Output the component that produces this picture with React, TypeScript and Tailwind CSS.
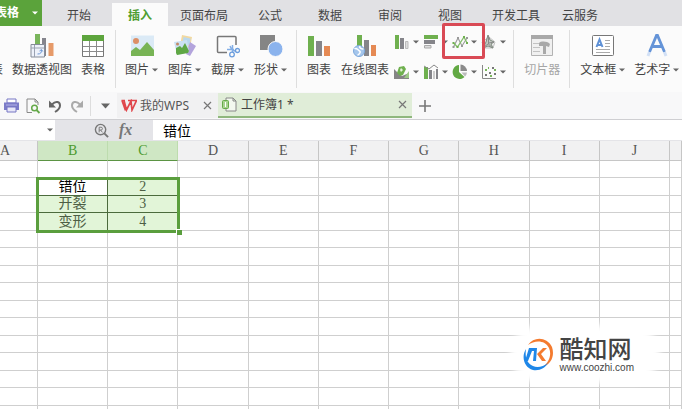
import React, { useState } from 'react';

const UI_FONT = "font-['Noto_Sans','Noto_Sans_CJK_SC',sans-serif]";
const CELL_FONT = "font-['Liberation_Serif','Noto_Sans_CJK_SC',serif]";

const TABS = [
  { name: '开始', width: 'w-[66px]' },
  { name: '插入', width: 'w-[56px]' },
  { name: '页面布局', width: 'w-[72px]' },
  { name: '公式', width: 'w-[60px]' },
  { name: '数据', width: 'w-[60px]' },
  { name: '审阅', width: 'w-[60px]' },
  { name: '视图', width: 'w-[60px]' },
  { name: '开发工具', width: 'w-[72px]' },
  { name: '云服务', width: 'w-[56px]' },
];

const COLUMNS = ['A', 'B', 'C', 'D', 'E', 'F', 'G', 'H', 'I', 'J', ''];
const DATA: Record<string, string> = {
  B2: '错位', C2: '2',
  B3: '开裂', C3: '3',
  B4: '变形', C4: '4',
};
const ROWS = Array.from({ length: 15 }, (_, i) => i + 1);

function Caret({ className = 'text-[#666]' }: { className?: string }) {
  return (
    <svg width="6" height="4" viewBox="0 0 6 4" className={`shrink-0 ${className}`} fill="currentColor">
      <path d="M0 0.500h6L3 3.500z" />
    </svg>
  );
}

interface ToolProps {
  label: string;
  menu?: boolean;
  disabled?: boolean;
  children: React.ReactNode;
}

function Tool({ label, menu, disabled, children }: ToolProps) {
  return (
    <button
      disabled={disabled}
      className={`flex shrink-0 flex-col items-center gap-[4px] pt-[4px] ${disabled ? 'text-[#a6a6a6]' : 'text-[#444]'}`}
    >
      <svg width="24" height="24" viewBox="0 0 24 24" fill="none">{children}</svg>
      <span className="flex items-center gap-[3px] text-[12px] leading-[16px] whitespace-nowrap">
        {label}
        {menu && <Caret />}
      </span>
    </button>
  );
}

function SmallTool({ title, children }: { title: string; children: React.ReactNode }) {
  return (
    <button title={title} aria-label={title} className="flex h-[30px] w-[29px] items-center gap-[3px]">
      <svg width="16" height="16" viewBox="0 0 16 16" fill="none" className="shrink-0">{children}</svg>
      <Caret />
    </button>
  );
}

function Ribbon() {
  return (
    <div className="flex h-[66px] overflow-hidden bg-[#fbfbfb] pt-[4px]">
      {/* 表格 */}
      <div className="flex h-[58px] shrink-0 items-start gap-[9px] border-r border-[#dedede] pr-[10px]">
        <div className="flex w-[3px] shrink-0 justify-end overflow-hidden pt-[32px] text-[12px] leading-[16px] whitespace-nowrap text-[#444]">
          表
        </div>
        <Tool label="数据透视图">
          <path d="M5 0h5v11H5z" fill="#7ab55c" />
          <path d="M12 4h4v18h-4z" fill="#85858d" />
          <path d="M18.500 9h5v13h-5z" fill="#e69a69" />
          <path d="M1 10.500h13.500V23H1z" fill="#eef2fa" stroke="#858c98" />
          <path d="M4.500 11v12M1 14h13" stroke="#9aa2b2" />
          <path d="M7.500 20c3 0 4-1 4-4M9.500 17l2-1.500 1.300 2" stroke="#6f99d6" />
        </Tool>
        <Tool label="表格">
          <path d="M1.500 1.500h21v21h-21z" fill="#fff" stroke="#777" />
          <path d="M1 1h22v6H1z" fill="#5da53d" />
          <path d="M2 12.500h20M2 17.500h20M8.500 7v15M15.500 7v15" stroke="#8b8b8b" />
        </Tool>
      </div>
      {/* 插图 */}
      <div className="flex h-[58px] shrink-0 items-start gap-[10px] border-r border-[#dedede] px-[9px]">
        <Tool label="图片" menu>
          <path d="M1 1.500h23V22H1z" fill="#dbeaf6" />
          <circle cx="6" cy="7" r="3" fill="#dc8f67" />
          <path d="M1 22v-5l5-4 4 3 7-8 7 8v6z" fill="#78b455" />
        </Tool>
        <Tool label="图库" menu>
          <path d="M9 1l10 2-2 11-10-2z" fill="#f2d9a0" />
          <path d="M10.500 3l7 1.500-1 7-7-1.500z" fill="#b9d8ee" />
          <path d="M17 8l6 4-6 10-4-2z" fill="#b3a4dc" />
          <path d="M1 8l13-2 2 12-12 3z" fill="#cbe1f3" />
          <path d="M3 19l0-5 4-2 2 2 3-5 4 8-1 2-11 2z" fill="#5fa745" />
          <circle cx="4.500" cy="10" r="1.500" fill="#c38a67" />
        </Tool>
        <Tool label="截屏" menu>
          <path d="M11 18.500H2.500a1 1 0 0 1-1-1v-14a1 1 0 0 1 1-1H19a1 1 0 0 1 1 1V11" stroke="#777" strokeWidth="1.500" />
          <path d="M16.500 11v7M11 15.500h7M16.500 16l5 2M14 12l2 4" stroke="#82aee6" strokeWidth="1.500" />
          <circle cx="16" cy="20.500" r="2.300" stroke="#6b9ddd" strokeWidth="1.300" fill="#fbfbfb" />
          <circle cx="21.500" cy="16.500" r="2" stroke="#6b9ddd" strokeWidth="1.300" fill="#fbfbfb" />
        </Tool>
        <Tool label="形状" menu>
          <path d="M1 1h15v15H1z" fill="#858585" />
          <circle cx="16.500" cy="15" r="7.500" fill="#8bb3ed" stroke="#fbfbfb" />
        </Tool>
      </div>
      {/* 图表 */}
      <div className="flex h-[58px] shrink-0 items-start gap-[10px] border-r border-[#dedede] pr-[3px] pl-[10px]">
        <Tool label="图表">
          <path d="M1 2h6v20H1z" fill="#6fb04f" />
          <path d="M9 7h6v15H9z" fill="#85858a" />
          <path d="M17 12h6v10h-6z" fill="#e58a54" />
        </Tool>
        <Tool label="在线图表">
          <path d="M4 1h5v12H4z" fill="#6fb04f" />
          <path d="M11 6h5v16h-5z" fill="#85858a" />
          <path d="M18 11h5v11h-5z" fill="#e58a54" />
          <circle cx="6" cy="17" r="5.500" fill="#a5c6ec" stroke="#7ca8dc" />
          <path d="M1.500 15c2-2 3 1 5 2s-1 4-2 4M7 12c-1 2 1 3 3.500 3" stroke="#fff" strokeWidth="1.500" />
        </Tool>
        <div className="-mt-[3px] -ml-[5px] grid grid-cols-4 content-start">
          <SmallTool title="柱形图">
            <path d="M1 1h4v14H1z" fill="#6fb04f" />
            <path d="M6 4h4v11H6z" fill="#85858a" />
            <path d="M11.500 7.500H14V14.500h-2.500z" fill="#ddd" stroke="#bbb" />
          </SmallTool>
          <SmallTool title="条形图">
            <path d="M1 1h14v4H1z" fill="#6fb04f" />
            <path d="M1 6h11v4H1z" fill="#85858a" />
            <path d="M1.500 11.500H8V14H1.500z" fill="#ddd" stroke="#aaa" />
          </SmallTool>
          <SmallTool title="折线图">
            <path d="M1.500 13l4.500-9 4 8 5-8" stroke="#9a9a9a" strokeWidth="1.100" />
            <path d="M1.500 9l4 4L12 3l3 6" stroke="#83bd69" strokeWidth="1.300" />
            <path d="M5 3h2v2H5zM9 11h2v2H9zM0.500 12h2v2h-2zM14 3h2v2h-2z" fill="#999" />
            <path d="M4.500 12h2v2h-2zM11 2h2v2h-2zM0.500 8h2v2h-2zM14 8h2v2h-2z" fill="#6fb04f" />
          </SmallTool>
          <SmallTool title="雷达图">
            <path d="M8 3l6 5-2 6H3L1 8z" fill="#ededed" stroke="#c4c4c4" />
            <path d="M7 1l2 5 4 2-3 2 2 4-5-2-5 2 3-6z" fill="#c3c9c2" stroke="#7e8a7e" />
            <path d="M7.500 2v8l3 3M7 10l-4 3M8 9l5-1" stroke="#8a8a8a" />
          </SmallTool>
          <SmallTool title="面积图">
            <path d="M0 5l4 4 4 3 7-3v6H0z" fill="#858585" />
            <path d="M3 9l2-6 5-1 2 3-3 6-3 1z" fill="#6fb04f" />
            <path d="M15 7v7h-5z" fill="#9dca86" />
            <path d="M7 4l2 2-2 2-1-2z" fill="#e5f0dc" />
          </SmallTool>
          <SmallTool title="组合图">
            <path d="M1 3h4v12H1z" fill="#6fb04f" />
            <path d="M6 6h3v9H6zM13 5h2v10h-2z" fill="#85858a" />
            <path d="M10 7h2v8h-2z" fill="#ccc" />
            <path d="M1 2l5 3 5-4 4 3" stroke="#888" />
          </SmallTool>
          <SmallTool title="饼图">
            <path d="M7 1a7 7 0 1 0 5.500 12L7 8z" fill="#62a944" />
            <path d="M8.500 0.500a7 7 0 0 1 6.500 6.500H8.500z" fill="#8a8a8a" />
            <path d="M9.500 8.500H15a7 7 0 0 1-2 4z" fill="#bbb" />
          </SmallTool>
          <SmallTool title="散点图">
            <path d="M1.500 1v13.500H15" stroke="#888" />
            <path d="M4 10h2v2H4zM8 8h2v2H8zM11 3h2v2h-2zM13 9h2v2h-2z" fill="#777" />
            <path d="M4 5h2v2H4zM9 11h2v2H9zM13 5h2v2h-2zM7 3h1v2H7z" fill="#7ab65c" />
          </SmallTool>
        </div>
      </div>
      {/* 筛选器 */}
      <div className="flex h-[58px] shrink-0 items-start border-r border-[#dedede] pr-[9px] pl-[10px]">
        <Tool label="切片器" disabled>
          <path d="M1.500 1.500h21v20h-21z" fill="#f0f0f0" stroke="#b3b3b3" />
          <path d="M1 1h22v4H1z" fill="#a9a9a9" />
          <path d="M3 9.500h7M3 13.500h7M3 17.500h7" stroke="#c2c2c2" />
          <path d="M9 9c2-2 8-2 11 1l-1 3-3-1v8h-3v-8H9z" fill="#a9a9a9" />
        </Tool>
      </div>
      {/* 文本 */}
      <div className="flex h-[58px] shrink-0 items-start gap-[9px] pl-[10px]">
        <Tool label="文本框" menu>
          <rect x="1.500" y="1.500" width="21" height="20" rx="1" fill="#fff" stroke="#777" />
          <path d="M5.500 13L8.500 5.500l3 7.500M6.500 11h4" stroke="#5f91d6" strokeWidth="2" />
          <path d="M14 6.500h5M14 9.500h5M14 12.500h5M5 15.500h14M5 18.500h14" stroke="#aaa" />
        </Tool>
        <Tool label="艺术字" menu>
          <path d="M4.500 18L11.500 1.500h1L19.500 18M7 12.500h10" stroke="#6594d8" strokeWidth="2.800" />
          <path d="M4.500 18L3 22M19.500 18l1.500 4" stroke="#d2e0f5" strokeWidth="3" />
        </Tool>
      </div>
    </div>
  );
}

function CloseButton() {
  return (
    <button aria-label="关闭">
      <svg width="9" height="9" viewBox="0 0 9 9" stroke="#777" strokeWidth="1.200"><path d="M1 1l7 7M8 1L1 8" /></svg>
    </button>
  );
}

function FileBar() {
  return (
    <div className="flex h-[28px] items-start border-b border-[#cfcfd2] bg-[#f8f8f9] pt-[1px]">
      <div className="flex h-[25px] w-[117px] shrink-0 items-center pl-[4px]">
        <button aria-label="打印" className="w-[22px]">
          <svg width="15" height="15" viewBox="0 0 15 15" fill="none">
            <path d="M3 1h9v4H3z" fill="#fff" stroke="#7777c4" />
            <path d="M0 4.500h15V12H0z" fill="#7b7bc8" />
            <path d="M3 9h9v5H3z" fill="#e7e7f8" stroke="#7777c4" />
            <path d="M2 7h11" stroke="#b5b5e6" />
          </svg>
        </button>
        <button aria-label="打印预览" className="w-[22px]">
          <svg width="15" height="16" viewBox="0 0 15 16" fill="none">
            <path d="M6 14.500H1V1h8l3 3v3M9 1v3h3" stroke="#888" />
            <circle cx="8.500" cy="10" r="2.800" stroke="#65a94a" strokeWidth="1.500" />
            <path d="M10.500 12l3 3" stroke="#65a94a" strokeWidth="1.800" />
          </svg>
        </button>
        <button aria-label="撤销" className="w-[22px]">
          <svg width="14" height="14" viewBox="0 0 14 14" fill="none">
            <path d="M4 5.500C8 1 12 3 12 6.500S9.500 11.500 7 13" stroke="#666" strokeWidth="2" />
            <path d="M1 1.500v7h7z" fill="#666" />
          </svg>
        </button>
        <button aria-label="恢复" className="w-[20px]">
          <svg width="14" height="14" viewBox="0 0 14 14" fill="none">
            <path d="M10 5.500C6 1 2 3 2 6.500S4.500 11.500 7 13" stroke="#aaa" strokeWidth="2" />
            <path d="M13 1.500v7H6z" fill="#aaa" />
          </svg>
        </button>
        <span className="h-[20px] w-px bg-[#ddd]" />
        <button aria-label="自定义快速访问工具栏" className="ml-[10px]">
          <svg width="9" height="6" viewBox="0 0 9 6" fill="#666"><path d="M0 0.500h9L4.500 5.500z" /></svg>
        </button>
      </div>
      <div className="flex h-[25px] w-[101px] shrink-0 items-center bg-[#f1f1f2] pr-[6px] pl-[4px] text-[12px] leading-[16px] text-[#555]">
        <svg width="16" height="13" viewBox="0 0 16 13" fill="none" className="mr-[3px]">
          <path d="M0.500 1.500H4M3 1.500l2.500 9.500L10 2l1 9 4.500-9.500H7M1 1.500l3.500 10" stroke="#e0474c" strokeWidth="1.700" />
        </svg>
        <button className="flex-1 text-left whitespace-nowrap">我的WPS</button>
        <CloseButton />
      </div>
      <div className="flex h-[25px] w-[194px] shrink-0 items-center border-b-2 border-[#8fb77d] bg-[#e0edd8] pr-[5px] pl-[4px] text-[12px] leading-[16px] text-[#444]">
        <svg width="15" height="15" viewBox="0 0 15 15" fill="none" className="mr-[4px]">
          <path d="M4 3V1h7l3 3v10H4v-2M11 1v3h3" stroke="#888" fill="#f3f8ef" />
          <rect x="0.500" y="3.500" width="6" height="8" rx="1" fill="#a8d391" stroke="#66aa49" />
          <path d="M3.500 5v5" stroke="#fff" />
        </svg>
        <button className="flex-1 text-left whitespace-nowrap">工作簿1 *</button>
        <CloseButton />
      </div>
      <button aria-label="新建" className="ml-[7px] flex h-[25px] items-center">
        <svg width="12" height="12" viewBox="0 0 12 12" stroke="#777" strokeWidth="1.600"><path d="M6 0v12M0 6h12" /></svg>
      </button>
    </div>
  );
}

function FormulaBar() {
  const [value, setValue] = useState('错位');
  return (
    <div className="flex h-[21px] bg-[#e4e4e8] pb-px">
      <button aria-label="名称框" className="flex h-full w-[55px] shrink-0 items-center justify-end bg-white pr-[2px]">
        <Caret />
      </button>
      <div className="flex h-full w-[98px] shrink-0 items-center pl-[39px]">
        <button aria-label="查找">
          <svg width="15" height="15" viewBox="0 0 16 16" fill="none" stroke="#777">
            <circle cx="7" cy="7" r="5.500" strokeWidth="1.500" />
            <path d="M11 11l4 4" strokeWidth="2" />
            <path d="M5.500 10V4.500h2a1.300 1.300 0 0 1 0 3h-2M7 7.500L9 10" />
          </svg>
        </button>
        <button aria-label="插入函数" className="ml-[10px] font-['Liberation_Serif',serif] text-[16px] leading-[16px] font-bold text-[#777] italic">
          fx
        </button>
      </div>
      <input
        aria-label="编辑栏"
        value={value}
        onChange={(e) => setValue(e.target.value)}
        className="h-full min-w-0 flex-1 bg-white pl-[10px] text-[14px] leading-[20px] text-black outline-none"
      />
    </div>
  );
}

function cellStyle(id: string) {
  if (id === 'B2') return 'border-[#4c6b3d] bg-white text-black';
  if (id in DATA) return 'border-[#4c6b3d] bg-[#e2f5d8] text-[#4d5e45]';
  return 'border-[#cfcfcf] bg-white';
}

function Sheet() {
  return (
    <table className={`w-full table-fixed border-separate border-spacing-0 ${CELL_FONT}`}>
      <colgroup>
        {COLUMNS.map((col, i) => (
          <col key={i} className={col === 'A' ? 'w-[38px]' : col === '' ? 'w-[12px]' : ''} />
        ))}
      </colgroup>
      <thead>
        <tr className="h-[20px]">
          {COLUMNS.map((col, i) => {
            const active = col === 'B' || col === 'C';
            return (
              <th
                key={i}
                className={`overflow-hidden border-r border-b p-0 text-[14px] leading-[16px] font-normal ${
                  active
                    ? 'border-r-[#bddcae] border-b-[#5b9443] bg-[#cfe7c4] text-[#4c9a2f]'
                    : 'border-[#c6c6c6] bg-[#f1f1f2] text-[#555]'
                } ${col === 'A' ? 'pr-[28px]' : ''}`}
              >
                {col}
              </th>
            );
          })}
        </tr>
      </thead>
      <tbody>
        {ROWS.map((row) => (
          <tr key={row} className="h-[17px] even:h-[18px]">
            {COLUMNS.map((col, i) => {
              const id = col + row;
              return (
                <td
                  key={i}
                  className={`relative border-r border-b p-0 text-center text-[14px] leading-[16px] ${cellStyle(id)}`}
                >
                  {DATA[id]}
                  {/* 选区边框 B2:C4 */}
                  {id === 'B2' && (
                    <span className="pointer-events-none absolute -top-px -left-[2px] z-10 box-content h-[50px] w-[200%] border-[3px] border-[#5a9e3d]">
                      <span className="absolute -right-[5px] -bottom-[5px] h-[6px] w-[6px] border-t border-l border-white bg-[#5a9e3d]" />
                    </span>
                  )}
                </td>
              );
            })}
          </tr>
        ))}
      </tbody>
    </table>
  );
}

function Watermark() {
  return (
    <div className="absolute right-[22px] bottom-[26px] flex h-[58px] items-center gap-[6px] pr-[26px] pl-[12px]">
      <div className="absolute inset-0 rounded-full bg-white blur-[3px]" />
      <svg width="32" height="34" viewBox="0 0 32 34" fill="none" className="relative">
        <path d="M6 8C12-1 25 0 30 10c3 9-1 17-9 20 6-5 9-12 6-19C23 3 13 3 6 8z" fill="#f47b2f" />
        <path d="M4 12C-1 20 2 30 11 33c7 1 12-2 15-7-5 4-11 5-15 3C4 26 3 19 4 12z" fill="#1f87e8" />
        <path d="M7 11h8l-1 13h-3l1-10h-2L6 24H3z" fill="#1f87e8" />
        <path d="M25 11h-4l-6 6 5 7h4l-5-7z" fill="#f47b2f" />
      </svg>
      <div className="relative flex flex-col text-[#444]">
        <span className="text-[24px] leading-[28px] font-medium whitespace-nowrap">酷知网</span>
        <span className="font-['Liberation_Sans',sans-serif] text-[10px] leading-[10px]">www.coozhi.com</span>
      </div>
    </div>
  );
}

export default function App() {
  const [tab, setTab] = useState('插入');

  return (
    <div className={`relative flex h-screen flex-col overflow-hidden bg-white ${UI_FONT}`}>
      <nav className="flex h-[26px] shrink-0 bg-[#e1e1e4] text-[12px] leading-[16px] text-[#444]">
        <button className="mr-[4px] flex w-[42px] shrink-0 items-center justify-end gap-[13px] overflow-hidden bg-[#5ba33b] pr-[4px] text-[12px] font-bold whitespace-nowrap text-white">
          表格
          <Caret className="text-white" />
        </button>
        {TABS.map((t) => (
          <button
            key={t.name}
            onClick={() => setTab(t.name)}
            className={`mt-[3px] h-[23px] shrink-0 pt-[2px] ${t.width} ${t.name === tab ? 'bg-[#fbfbfb] font-bold text-[#4f9e30]' : ''}`}
          >
            {t.name}
          </button>
        ))}
      </nav>
      <div className="relative shrink-0">
        <Ribbon />
        {/* 折线图高亮框 */}
        <div className="pointer-events-none absolute -top-[3px] left-[442px] h-[36px] w-[43px] rounded-[2px] border-[3px] border-[#d94a55]" />
      </div>
      <div className="shrink-0">
        <FileBar />
        <FormulaBar />
      </div>
      <main className="min-h-0 flex-1 overflow-hidden">
        <Sheet />
      </main>
      <Watermark />
    </div>
  );
}
